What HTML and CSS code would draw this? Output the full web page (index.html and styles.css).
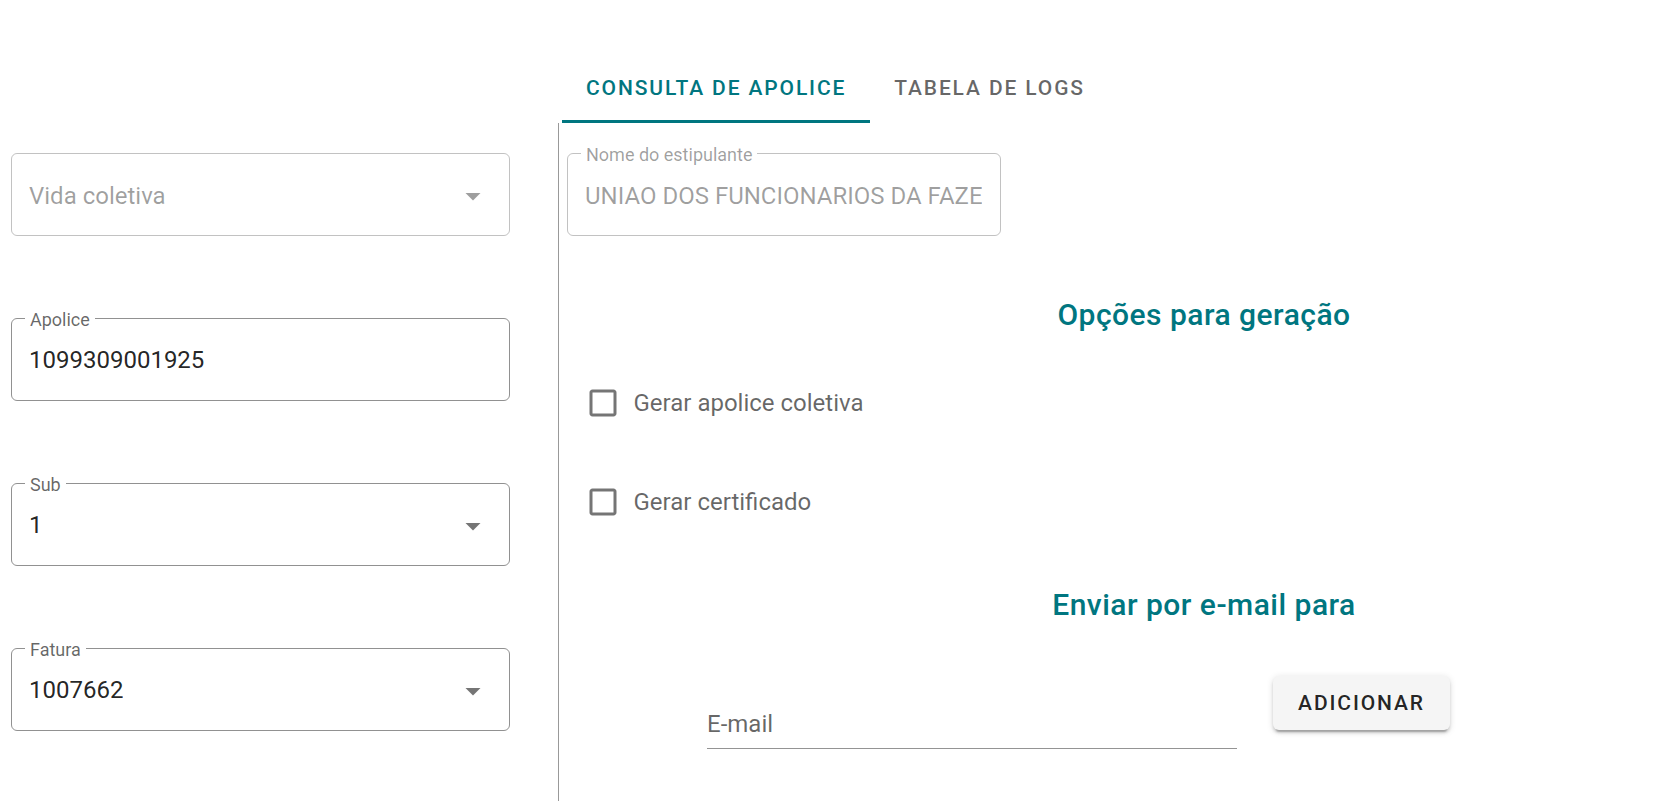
FILE: index.html
```html
<!DOCTYPE html>
<html lang="pt-BR">
<head>
<meta charset="utf-8">
<title>Consulta de apolice</title>
<link rel="stylesheet" href="styles.css">
</head>
<body>
<div class="page">
  <nav class="tabs">
    <div class="tab active">Consulta de apolice</div>
    <div class="tab">Tabela de logs</div>
  </nav>
  <main class="main">
    <section class="left">
      <div class="field select disabled">
        <span class="value">Vida coletiva</span>
        <svg class="arrow" viewBox="0 0 24 24"><path d="M7 10l5 5 5-5z"/></svg>
      </div>
      <div class="field">
        <span class="label">Apolice</span>
        <span class="value">1099309001925</span>
      </div>
      <div class="field select">
        <span class="label">Sub</span>
        <span class="value">1</span>
        <svg class="arrow" viewBox="0 0 24 24"><path d="M7 10l5 5 5-5z"/></svg>
      </div>
      <div class="field select">
        <span class="label">Fatura</span>
        <span class="value">1007662</span>
        <svg class="arrow" viewBox="0 0 24 24"><path d="M7 10l5 5 5-5z"/></svg>
      </div>
    </section>
    <section class="right">
      <div class="field disabled nome">
        <span class="label">Nome do estipulante</span>
        <span class="value">UNIAO DOS FUNCIONARIOS DA FAZE</span>
      </div>
      <h2 class="heading">Opções para geração</h2>
      <label class="check first">
        <svg class="box" viewBox="0 0 24 24"><path d="M19 5v14H5V5h14m0-2H5c-1.11 0-2 .9-2 2v14c0 1.1.89 2 2 2h14c1.1 0 2-.9 2-2V5c0-1.1-.9-2-2-2z"/></svg>
        <span>Gerar apolice coletiva</span>
      </label>
      <label class="check second">
        <svg class="box" viewBox="0 0 24 24"><path d="M19 5v14H5V5h14m0-2H5c-1.11 0-2 .9-2 2v14c0 1.1.89 2 2 2h14c1.1 0 2-.9 2-2V5c0-1.1-.9-2-2-2z"/></svg>
        <span>Gerar certificado</span>
      </label>
      <h2 class="heading heading-email">Enviar por e-mail para</h2>
      <div class="email-row">
        <div class="email">E-mail</div>
        <button class="btn" type="button">Adicionar</button>
      </div>
    </section>
  </main>
</div>
</body>
</html>
```
FILE: styles.css
```css
html, body {
  margin: 0;
  padding: 0;
  background: #fff;
}

body {
  font-family: Roboto, "Noto Sans", "Liberation Sans", sans-serif;
  color: rgba(0, 0, 0, 0.87);
}

.page {
  min-height: 100vh;
  display: flex;
  flex-direction: column;
}

/* Tabs */
.tabs {
  display: flex;
  padding: 51px 0 0 562px;
  height: 72px;
}

.tab {
  height: 72px;
  padding: 1px 24px 0;
  box-sizing: border-box;
  display: flex;
  align-items: center;
  justify-content: center;
  font-size: 21px;
  font-weight: 500;
  letter-spacing: 0.089em;
  text-transform: uppercase;
  color: rgba(0, 0, 0, 0.6);
}

.tab.active {
  color: #007680;
  box-shadow: inset 0 -3px 0 #007680;
}

/* Main grid */
.main {
  flex: 1;
  display: grid;
  grid-template-columns: 558px 1fr;
}

.left {
  padding: 30px 0 0 11px;
  display: flex;
  flex-direction: column;
  gap: 82px;
}

.right {
  border-left: 1px solid rgba(0, 0, 0, 0.4);
  padding: 30px 0 0 8px;
}

/* Outlined fields */
.field {
  position: relative;
  box-sizing: border-box;
  width: 499px;
  height: 83px;
  border: 1px solid #919191;
  border-radius: 6px;
  display: flex;
  align-items: center;
  padding: 0 18px 0 17px;
  font-size: 24px;
  color: rgba(0, 0, 0, 0.87);
}

.field .value {
  line-height: 28px;
  white-space: nowrap;
  overflow: hidden;
}

.field .label {
  position: absolute;
  left: 13px;
  top: -8px;
  padding: 0 5px;
  background: #fff;
  font-size: 18px;
  line-height: 18px;
  color: rgba(0, 0, 0, 0.6);
}

.field .arrow {
  width: 36px;
  height: 36px;
  margin-left: auto;
  margin-top: 3px;
  flex: none;
  fill: rgba(0, 0, 0, 0.54);
}

.field.disabled {
  border-color: rgba(0, 0, 0, 0.24);
  color: rgba(0, 0, 0, 0.38);
}

.field.disabled .value {
  padding-top: 2px;
}

.field.disabled .label {
  color: rgba(0, 0, 0, 0.38);
}

.field.disabled .arrow {
  fill: rgba(0, 0, 0, 0.38);
}

.field.nome {
  width: 434px;
}

/* Headings */
.heading {
  margin: 55px 0 0;
  padding-left: 186px;
  text-align: center;
  font-size: 30px;
  font-weight: 500;
  line-height: 48px;
  letter-spacing: 0.016em;
  color: #007680;
}

.heading-email {
  margin-top: 61px;
}

/* Checkboxes */
.check {
  display: flex;
  align-items: center;
  gap: 12.5px;
  height: 36px;
  margin-left: 18px;
  font-size: 24px;
  line-height: 36px;
  color: rgba(0, 0, 0, 0.6);
}

.check.first {
  margin-top: 46px;
}

.check.second {
  margin-top: 63px;
}

.check .box {
  width: 36px;
  height: 36px;
  fill: rgba(0, 0, 0, 0.54);
  flex: none;
}

/* Email row */
.email-row {
  display: flex;
  align-items: flex-start;
  gap: 36px;
  margin: 46px 0 0 140px;
}

.email {
  box-sizing: border-box;
  width: 530px;
  padding: 35px 0 10px;
  font-size: 24px;
  line-height: 28px;
  color: rgba(0, 0, 0, 0.6);
  border-bottom: 1px solid rgba(0, 0, 0, 0.42);
}

.btn {
  width: 177px;
  height: 54px;
  margin-top: 1px;
  padding: 0;
  border: 0;
  border-radius: 6px;
  background: #f5f5f5;
  font-family: Roboto, "Noto Sans", "Liberation Sans", sans-serif;
  font-size: 21px;
  font-weight: 500;
  letter-spacing: 0.089em;
  text-transform: uppercase;
  color: rgba(0, 0, 0, 0.87);
  box-shadow: 0 4.5px 1.5px -3px rgba(0, 0, 0, 0.2),
              0 3px 3px 0 rgba(0, 0, 0, 0.14),
              0 1.5px 7.5px 0 rgba(0, 0, 0, 0.12);
}
```
